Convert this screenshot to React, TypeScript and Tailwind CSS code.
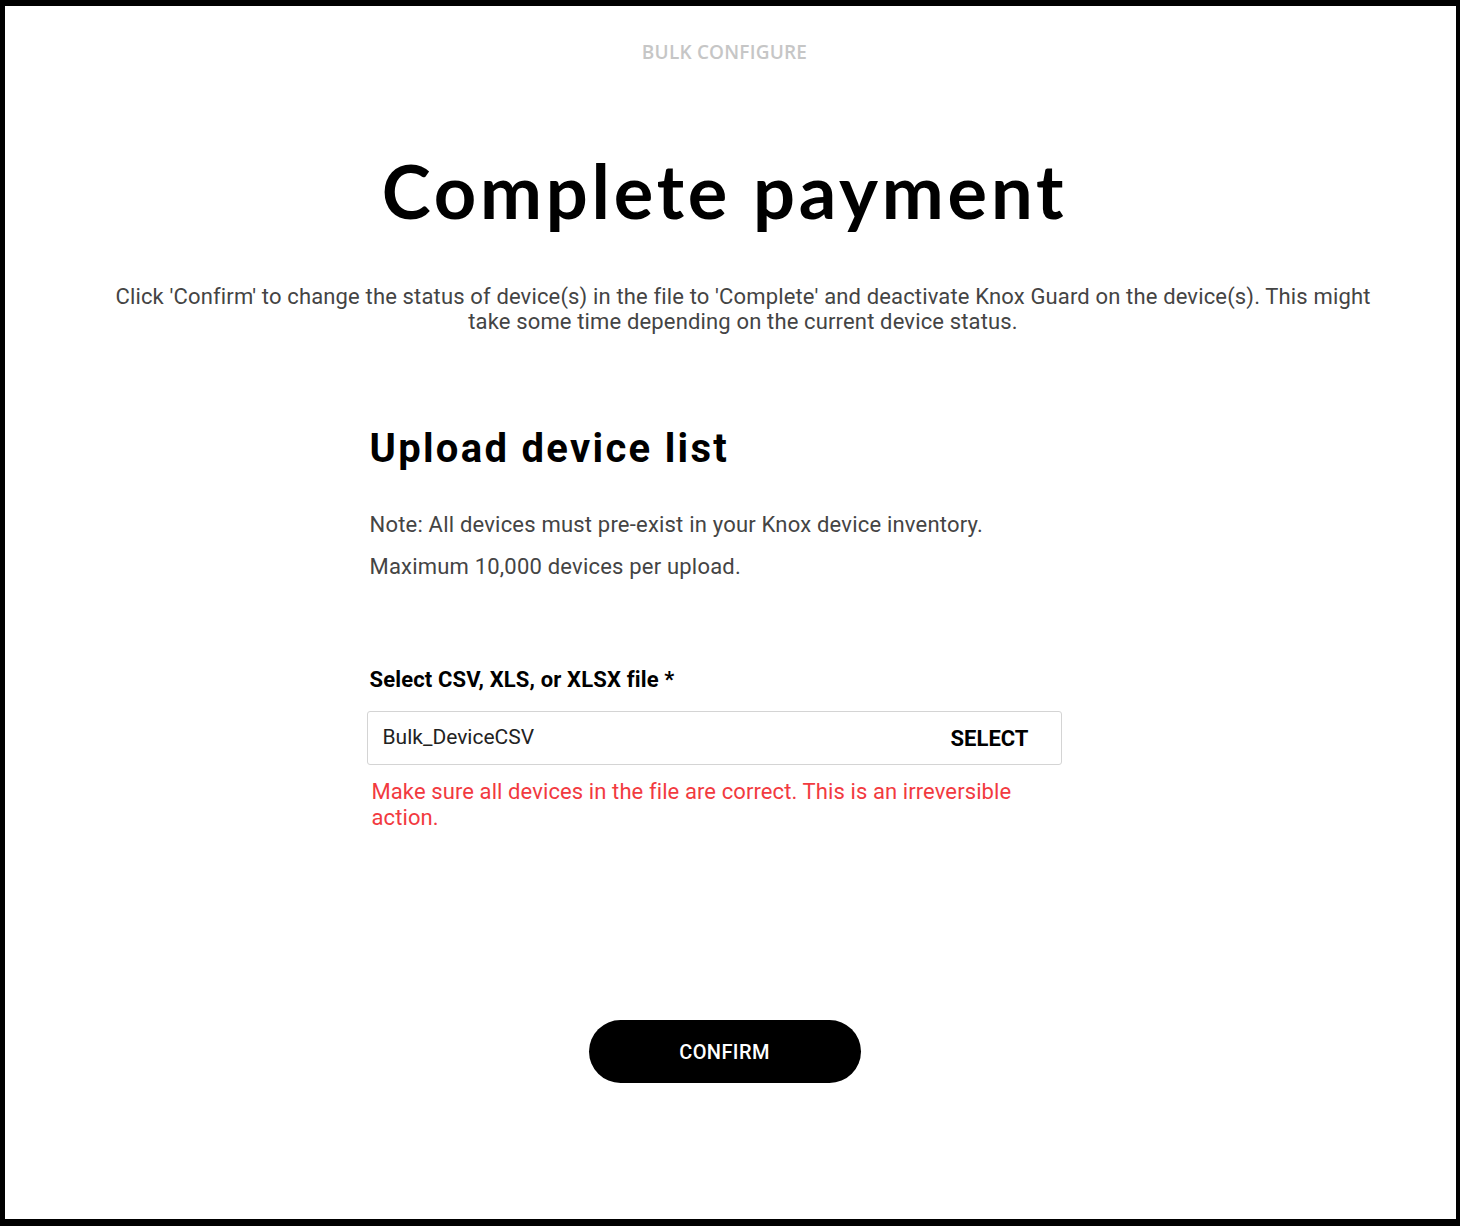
export default function App() {
  return (
    <div className="h-[1226px] w-full bg-white border-black border-t-[6px] border-l-[5px] border-r-[4px] border-b-[7px] font-['Roboto',sans-serif]">
      <div className="flex flex-col items-center pr-[12px]">
        <div className="mt-[34px] text-[19px] leading-[24px] tracking-[0.2px] text-[#c6c6c6] font-['Open_Sans',sans-serif] font-semibold">
          BULK CONFIGURE
        </div>
        <h1 className="mt-[87px] text-[74px] leading-[80px] font-bold tracking-[3.8px] text-black font-['Lato',sans-serif]">
          Complete payment
        </h1>
        <p className="mt-[53px] ml-[37px] w-[1262px] text-center text-[22px] leading-[25px] tracking-[0.15px] text-[#444]">
          Click 'Confirm' to change the status of device(s) in the file to 'Complete' and deactivate Knox Guard on the device(s). This might take some time depending on the current device status.
        </p>
        <div className="mt-[93px] w-[726px] pl-[8px]">
          <h2 className="text-[40px] leading-[44px] font-bold tracking-[2.3px] text-black">Upload device list</h2>
          <p className="mt-[40px] text-[22px] leading-[28px] tracking-[0.2px] text-[#444]">
            Note: All devices must pre-exist in your Knox device inventory.
          </p>
          <p className="mt-[14px] text-[22px] leading-[28px] tracking-[0.2px] text-[#444]">Maximum 10,000 devices per upload.</p>
          <label className="mt-[85px] block text-[22px] leading-[28px] font-bold text-black tracking-[0.15px]">
            Select CSV, XLS, or XLSX file *
          </label>
          <div className="mt-[17px] -ml-[3px] w-[695px] h-[54px] border border-[#d4d4d4] rounded-[3px] flex items-center justify-between pl-[15px] pr-[32px]">
            <span className="text-[21px] text-[#222]">Bulk_DeviceCSV</span>
            <span className="text-[22px] font-bold text-black">SELECT</span>
          </div>
          <p className="mt-[14px] ml-[2px] w-[690px] text-[22px] leading-[26px] tracking-[0.1px] text-[#f23a3f]">
            Make sure all devices in the file are correct. This is an irreversible action.
          </p>
        </div>
        <button className="mt-[189px] w-[272px] h-[63px] rounded-full bg-black text-white text-[20px] tracking-[0.4px] font-medium">
          CONFIRM
        </button>
      </div>
    </div>
  );
}
